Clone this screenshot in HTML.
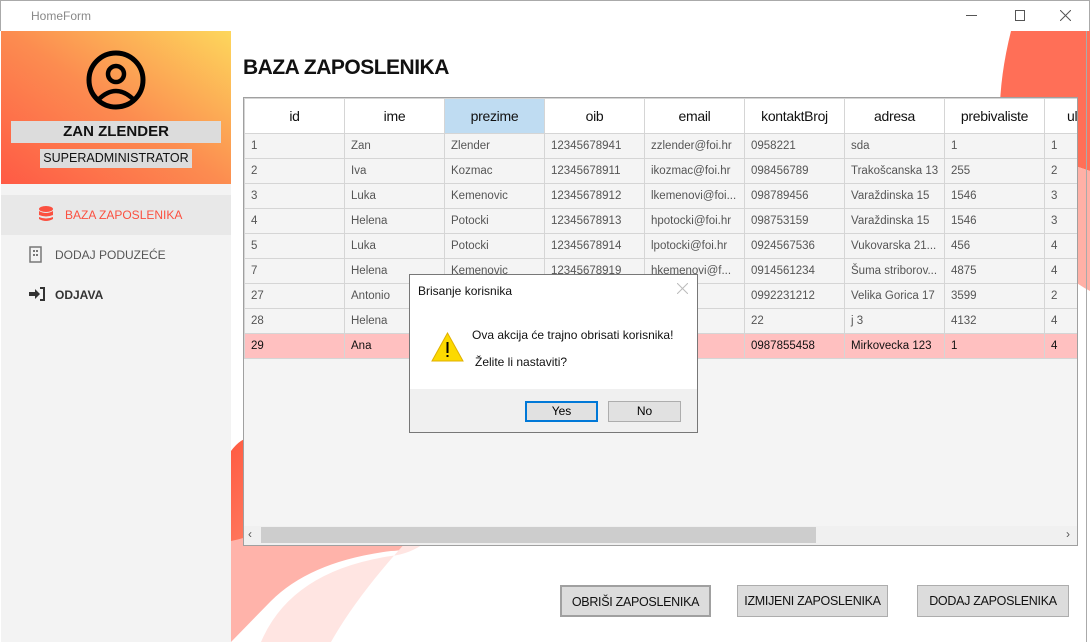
<!DOCTYPE html>
<html><head><meta charset="utf-8"><style>
*{margin:0;padding:0;box-sizing:border-box}
body{width:1090px;height:642px;overflow:hidden;background:#fff;font-family:"Liberation Sans",sans-serif;position:relative}
.abs{position:absolute}
.tb{left:0;top:0;width:1090px;height:31px;background:#fff;border:1px solid #aaa;border-bottom:none}
.side{left:1px;top:31px;width:230px;height:611px;background:#f3f3f3}
.hdr{left:1px;top:31px;width:230px;height:153px;background:linear-gradient(35deg,#ff5a45 0%,#fc8c50 50%,#fdd75c 100%)}
.menu{font-size:12px;color:#555}
table{border-collapse:collapse;table-layout:fixed;width:900px}
td,th{width:100px;height:25px;border:1px solid #d5d5d5;font-size:11.5px;color:#555;text-align:left;padding-left:6px;white-space:nowrap;overflow:hidden;font-weight:normal}
th{height:35px;font-size:14px;color:#111;text-align:center;padding:0;background:#fff;letter-spacing:-.3px}
tr.sel td{background:#ffc0c0;color:#111}
.btn{height:32px;background:#dcdcdc;border:1px solid #adadad;font-size:12.5px;color:#111;text-align:center;line-height:30px;letter-spacing:-.3px}
</style></head><body>
<svg class="abs" style="left:231px;top:31px" width="859" height="611">
 <path d="M780 0 Q765 60 770 110 L859 140 L859 0Z" fill="#ff6f57"/>
 <path d="M770 110 Q800 230 859 260 L859 140Z" fill="#ffb0a6"/>
 <defs><linearGradient id="g1" x1="0" y1="0" x2="1" y2="1"><stop offset="0" stop-color="#ff5a40"/><stop offset="1" stop-color="#ff8a70"/></linearGradient></defs>
 <path d="M0 420 Q20 440 70 425 Q200 400 240 445 Q200 520 160 520 Q80 530 40 570 L0 611Z" fill="#ffb3aa"/>
 <path d="M0 420 Q30 380 60 460 Q50 500 0 510Z" fill="url(#g1)"/>
 <path d="M240 445 Q210 520 160 525 Q60 540 30 611 L100 611 Q140 540 240 445Z" fill="#ffe5e2"/>
</svg>
<div class="abs tb"></div>
<div class="abs" style="left:31px;top:9px;font-size:12px;color:#888">HomeForm</div>
<div class="abs" style="left:966px;top:15px;width:11px;height:1px;background:#555"></div>
<div class="abs" style="left:1015px;top:10px;width:10px;height:11px;border:1px solid #555"></div>
<svg class="abs" style="left:1060px;top:10px" width="11" height="11"><path d="M0 0L11 11M11 0L0 11" stroke="#555" stroke-width="1"/></svg>
<div class="abs side"></div>
<div class="abs hdr"></div>
<svg class="abs" style="left:86px;top:50px" width="60" height="60" viewBox="0 0 60 60"><circle cx="30" cy="30" r="27" fill="none" stroke="#000" stroke-width="5"/><circle cx="30" cy="24" r="8" fill="none" stroke="#000" stroke-width="4.5"/><path d="M12 50 Q30 32 48 50" fill="none" stroke="#000" stroke-width="4.5"/></svg>
<div class="abs" style="left:11px;top:121px;width:210px;height:22px;background:#dcdcdc;text-align:center;font-weight:bold;font-size:15px;line-height:22px;color:#111">ZAN ZLENDER</div>
<div class="abs" style="left:40px;top:149px;width:152px;height:19px;background:#dcdcdc;text-align:center;font-size:12.5px;line-height:19px;color:#111">SUPERADMINISTRATOR</div>
<div class="abs" style="left:1px;top:195px;width:230px;height:40px;background:#e8e8e8"></div>
<svg class="abs" style="left:39px;top:206px" width="14" height="16" viewBox="0 0 14 16"><ellipse cx="7" cy="3" rx="7" ry="3" fill="#fb5040"/><path d="M0 5 Q7 9 14 5 V9 Q7 12 0 9Z M0 11 Q7 14 14 11 V13 Q7 17 0 13Z" fill="#fb5040"/></svg>
<div class="abs menu" style="left:65px;top:208px;color:#fb5040">BAZA ZAPOSLENIKA</div>
<svg class="abs" style="left:29px;top:246px" width="14" height="17"><rect x="1" y="1" width="11" height="15" fill="none" stroke="#777" stroke-width="1.5"/><rect x="4" y="4" width="2" height="2" fill="#777"/><rect x="7" y="4" width="2" height="2" fill="#777"/><rect x="4" y="8" width="2" height="2" fill="#777"/><rect x="7" y="8" width="2" height="2" fill="#777"/></svg>
<div class="abs menu" style="left:55px;top:248px">DODAJ PODUZEĆE</div>
<svg class="abs" style="left:28px;top:287px" width="18" height="14"><path d="M1 5h6V2l5 5-5 5V9H1z" fill="#333"/><path d="M12 1h4v12h-4" fill="none" stroke="#333" stroke-width="2"/></svg>
<div class="abs menu" style="left:55px;top:288px;font-weight:bold;color:#333">ODJAVA</div>
<div class="abs" style="left:243px;top:56px;font-size:21px;font-weight:bold;color:#111;letter-spacing:-.5px">BAZA ZAPOSLENIKA</div>
<div class="abs" style="left:243px;top:97px;width:835px;height:449px;background:#f4f4f4;border:1px solid #a0a0a0;overflow:hidden">
<table>
<tr><th>id</th><th>ime</th><th style="background:#bfdcf2">prezime</th><th>oib</th><th>email</th><th>kontaktBroj</th><th>adresa</th><th>prebivaliste</th><th style="text-align:left;padding-left:22px">ul</th></tr>
<tr><td>1</td><td>Zan</td><td>Zlender</td><td>12345678941</td><td>zzlender@foi.hr</td><td>0958221</td><td>sda</td><td>1</td><td>1</td></tr>
<tr><td>2</td><td>Iva</td><td>Kozmac</td><td>12345678911</td><td>ikozmac@foi.hr</td><td>098456789</td><td>Trakošcanska 13</td><td>255</td><td>2</td></tr>
<tr><td>3</td><td>Luka</td><td>Kemenovic</td><td>12345678912</td><td>lkemenovi@foi...</td><td>098789456</td><td>Varaždinska 15</td><td>1546</td><td>3</td></tr>
<tr><td>4</td><td>Helena</td><td>Potocki</td><td>12345678913</td><td>hpotocki@foi.hr</td><td>098753159</td><td>Varaždinska 15</td><td>1546</td><td>3</td></tr>
<tr><td>5</td><td>Luka</td><td>Potocki</td><td>12345678914</td><td>lpotocki@foi.hr</td><td>0924567536</td><td>Vukovarska 21...</td><td>456</td><td>4</td></tr>
<tr><td>7</td><td>Helena</td><td>Kemenovic</td><td>12345678919</td><td>hkemenovi@f...</td><td>0914561234</td><td>Šuma striborov...</td><td>4875</td><td>4</td></tr>
<tr><td>27</td><td>Antonio</td><td></td><td></td><td>@foi.hr</td><td>0992231212</td><td>Velika Gorica 17</td><td>3599</td><td>2</td></tr>
<tr><td>28</td><td>Helena</td><td></td><td></td><td></td><td>22</td><td>j 3</td><td>4132</td><td>4</td></tr>
<tr class="sel"><td>29</td><td>Ana</td><td></td><td></td><td>oi.hr</td><td>0987855458</td><td>Mirkovecka 123</td><td>1</td><td>4</td></tr>
</table>
<div class="abs" style="left:0;top:428px;width:835px;height:20px;background:#f0f0f0"></div>
<div class="abs" style="left:17px;top:429px;width:555px;height:16px;background:#cdcdcd"></div>
<div class="abs" style="left:4px;top:429px;font-size:12px;color:#555">‹</div>
<div class="abs" style="left:822px;top:429px;font-size:12px;color:#555">›</div>
</div>
<div class="abs" style="left:409px;top:274px;width:289px;height:159px;background:#fff;border:1px solid #777">
 <div class="abs" style="left:8px;top:9px;font-size:12px;color:#111">Brisanje korisnika</div>
 <svg class="abs" style="left:267px;top:8px" width="11" height="11"><path d="M0 0L11 11M11 0L0 11" stroke="#bbb" stroke-width="1"/></svg>
 <svg class="abs" style="left:21px;top:57px" width="33" height="30"><path d="M16.5 1L32 29H1Z" fill="#fcd900" stroke="#e0b000"/><rect x="15.5" y="10" width="2" height="11" fill="#000"/><rect x="15.5" y="23" width="2" height="2" fill="#000"/></svg>
 <div class="abs" style="left:62px;top:53px;font-size:12px;color:#111">Ova akcija će trajno obrisati korisnika!</div>
 <div class="abs" style="left:65px;top:80px;font-size:12px;color:#111">Želite li nastaviti?</div>
 <div class="abs" style="left:0;top:114px;width:287px;height:43px;background:#f0f0f0"></div>
 <div class="abs" style="left:115px;top:126px;width:73px;height:21px;background:#e1e1e1;border:2px solid #0078d7;font-size:12px;text-align:center;line-height:17px">Yes</div>
 <div class="abs" style="left:198px;top:126px;width:73px;height:21px;background:#e1e1e1;border:1px solid #adadad;font-size:12px;text-align:center;line-height:19px">No</div>
</div>
<div class="abs btn" style="left:560px;top:585px;width:151px;border:2px solid #a0a0a0">OBRIŠI ZAPOSLENIKA</div>
<div class="abs btn" style="left:737px;top:585px;width:151px">IZMIJENI ZAPOSLENIKA</div>
<div class="abs btn" style="left:917px;top:585px;width:152px">DODAJ ZAPOSLENIKA</div>
<div class="abs" style="left:1086px;top:31px;width:1px;height:611px;background:#aaa"></div>
</body></html>
